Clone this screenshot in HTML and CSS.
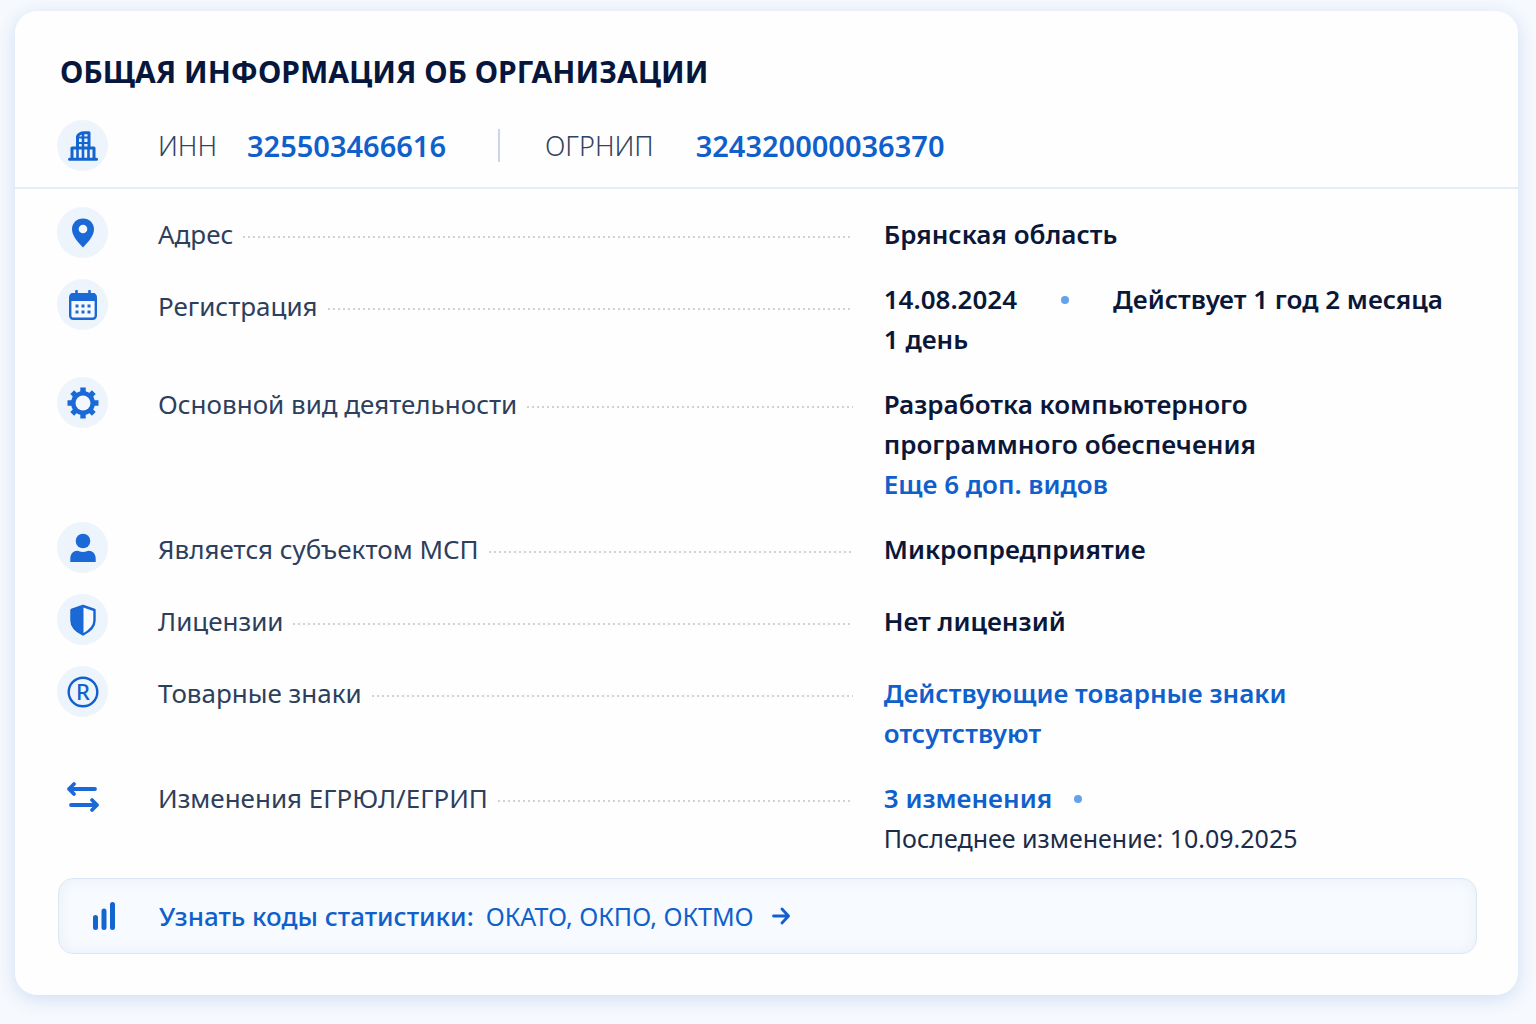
FILE: index.html
```html
<!DOCTYPE html>
<html lang="ru">
<head>
    <meta charset="UTF-8">
    <meta name="viewport" content="width=device-width, initial-scale=1">
    <title>Общая информация об организации</title>
    <link rel="stylesheet" href="styles.css">
</head>
<body>
    <main class="card">
        <h1 class="title">ОБЩАЯ ИНФОРМАЦИЯ ОБ ОРГАНИЗАЦИИ</h1>

        <!-- ИНН и ОГРНИП -->
        <div class="codes">
            <span class="icon">
                <svg width="30" height="30" viewBox="0 0 30 30" fill="none" stroke="#1565d0">
                    <path d="M1.500 28.300h27" stroke-width="3" stroke-linecap="round"/>
                    <path d="M4 28V17h22v11M9.500 17V5.500C11 2.500 13 1.800 16 1.800h5V17" stroke-width="3" stroke-linejoin="round"/>
                    <path d="M9.500 17v11M15 2v26M20.500 17v11" stroke-width="2.600"/>
                    <path d="M9.500 6.500h11M9.500 12h11" stroke-width="2.200"/>
                </svg>
            </span>
            <span class="code-label">ИНН</span>
            <a class="code" href="#">325503466616</a>
            <span class="separator"></span>
            <span class="code-label">ОГРНИП</span>
            <a class="code" href="#">324320000036370</a>
        </div>

        <!-- Основные сведения -->
        <dl class="rows">
            <div class="row">
                <dt class="name">
                    <span class="icon">
                        <svg width="24" height="30" viewBox="0 0 24 30">
                            <path d="M12 .5C5.700.5 1 5.200 1 11.200 1 18.500 8 25 12 29.500 16 25 23 18.500 23 11.200 23 5.200 18.300.5 12 .5z" fill="#1b69d6"/>
                            <circle cx="12" cy="11" r="4.300" fill="#f3f8fd"/>
                        </svg>
                    </span>
                    <span class="label">Адрес</span>
                    <span class="dots"></span>
                </dt>
                <dd class="value">Брянская область</dd>
            </div>

            <div class="row">
                <dt class="name">
                    <span class="icon">
                        <svg width="28" height="30" viewBox="0 0 28 30">
                            <path d="M7.500 1v4M20.500 1v4" stroke="#1b69d6" stroke-width="2.600" stroke-linecap="round"/>
                            <rect x="1.200" y="4.200" width="25.600" height="24.600" rx="3" fill="#f6faff" stroke="#1b69d6" stroke-width="2.400"/>
                            <path d="M1 11V6a3 3 0 0 1 3-3h20a3 3 0 0 1 3 3v5z" fill="#1b69d6"/>
                            <path d="M6.500 16h3M12.500 16h3M18.500 16h3M6.500 22h3M12.500 22h3M18.500 22h3" stroke="#1b69d6" stroke-width="2.800"/>
                        </svg>
                    </span>
                    <span class="label">Регистрация</span>
                    <span class="dots"></span>
                </dt>
                <dd class="value value-top">14.08.2024<span class="bullet bullet-wide"></span>Действует 1 год 2 месяца<br>1 день</dd>
            </div>

            <div class="row">
                <dt class="name">
                    <span class="icon">
                        <svg width="32" height="32" viewBox="0 0 32 32">
                            <g stroke="#1b69d6" stroke-width="5.400">
                                <path d="M16 .5v31M.5 16h31"/>
                                <path d="M5.200 5.200l21.600 21.600M26.800 5.200L5.200 26.800"/>
                            </g>
                            <circle cx="16" cy="16" r="12" fill="#1b69d6"/>
                            <circle cx="16" cy="16" r="7.500" fill="#f3f8fd"/>
                        </svg>
                    </span>
                    <span class="label">Основной вид деятельности</span>
                    <span class="dots"></span>
                </dt>
                <dd class="value value-narrow">
                    Разработка компьютерного программного обеспечения
                    <a class="block-link" href="#">Еще 6 доп. видов</a>
                </dd>
            </div>

            <div class="row">
                <dt class="name">
                    <span class="icon">
                        <svg width="26" height="30" viewBox="0 0 26 30" fill="#1b69d6">
                            <circle cx="13" cy="8" r="7.300"/>
                            <path d="M.300 29v-3.500C.3 20.500 3.500 17.700 7.200 17.700c2 0 3 1.300 5.800 1.300s3.800-1.300 5.800-1.300c3.700 0 6.900 2.800 6.900 7.800V29z"/>
                        </svg>
                    </span>
                    <span class="label">Является субъектом МСП</span>
                    <span class="dots"></span>
                </dt>
                <dd class="value">Микропредприятие</dd>
            </div>

            <div class="row">
                <dt class="name">
                    <span class="icon">
                        <svg width="26" height="32" viewBox="0 0 26 32">
                            <path d="M13 2L24.500 6v10.500c0 6-4.500 10.500-11.500 14-7-3.500-11.500-8-11.500-14V6z" fill="#f8fbff" stroke="#1565d0" stroke-width="2.400" stroke-linejoin="round"/>
                            <path d="M13.500 2L1.500 6v10.500c0 6 5 10.500 12 14z" fill="#1b69d6"/>
                        </svg>
                    </span>
                    <span class="label">Лицензии</span>
                    <span class="dots"></span>
                </dt>
                <dd class="value">Нет лицензий</dd>
            </div>

            <div class="row">
                <dt class="name">
                    <span class="icon">
                        <svg width="32" height="32" viewBox="0 0 32 32">
                            <circle cx="16" cy="16" r="14.300" fill="none" stroke="#1260cf" stroke-width="2.400"/>
                            <text class="mark" x="16" y="24" text-anchor="middle">R</text>
                        </svg>
                    </span>
                    <span class="label">Товарные знаки</span>
                    <span class="dots"></span>
                </dt>
                <dd class="value value-narrow"><a href="#">Действующие товарные знаки отсутствуют</a></dd>
            </div>

            <div class="row">
                <dt class="name">
                    <span class="icon icon-plain">
                        <svg width="34" height="32" viewBox="0 0 34 32" fill="none" stroke="#1b69d6" stroke-width="3.800" stroke-linecap="round" stroke-linejoin="round">
                            <path d="M29 8H3M8 3L3 8l5 5"/>
                            <path d="M5 24h26M26 19l5 5-5 5"/>
                        </svg>
                    </span>
                    <span class="label">Изменения ЕГРЮЛ/ЕГРИП</span>
                    <span class="dots"></span>
                </dt>
                <dd class="value">
                    <a href="#">3 изменения</a><span class="bullet"></span>
                    <span class="note">Последнее изменение: 10.09.2025</span>
                </dd>
            </div>
        </dl>

        <!-- Коды статистики -->
        <a class="stats" href="#">
            <svg class="stats-icon" width="24" height="30" viewBox="0 0 24 30" stroke="#1565d0" stroke-width="5" stroke-linecap="round">
                <path d="M3.500 16.500v10M12 10v16.500M20.500 3.500v23"/>
            </svg>
            <span class="stats-title">Узнать коды статистики:</span>
            <span class="stats-codes">ОКАТО, ОКПО, ОКТМО</span>
            <svg class="arrow" width="18" height="18" viewBox="0 0 18 18" fill="none" stroke="#1260cf" stroke-width="2.800" stroke-linecap="round" stroke-linejoin="round">
                <path d="M1.500 9h15M10 2l6.500 7-6.500 7"/>
            </svg>
        </a>
    </main>
</body>
</html>
```
FILE: styles.css
```css
* {
    box-sizing: border-box;
}
body {
    margin: 0;
    padding: 11px 18px 28px 15px;
    background-color: #f6f9fd;
    font-family: 'Noto Sans', 'Open Sans', sans-serif;
    font-size: 26px;
    line-height: 40px;
    color: #0a1738;
}
a {
    color: #0f60cb;
    text-decoration: none;
}
.card {
    padding-bottom: 41px;
    background-color: #fefefe;
    border-radius: 22px;
    box-shadow: 0 4px 18px rgba(80, 130, 215, 0.22);
}
.title {
    margin: 0;
    padding: 41px 45px 0;
    font-size: 30px;
    line-height: 40px;
    font-weight: 700;
    color: #06163c;
}

/* ИНН / ОГРНИП */
.codes {
    display: flex;
    align-items: center;
    padding: 28px 42px 16px;
    border-bottom: 2px solid #e6edf6;
}
.code-label {
    margin-right: 30px;
    font-size: 27px;
    font-weight: 300;
    color: #33435f;
}
.separator + .code-label {
    margin-right: 42px;
}
.code {
    font-size: 29px;
    font-weight: 600;
}
.separator {
    width: 2px;
    height: 33px;
    margin: 0 45px 0 52px;
    background-color: #cbd6ea;
}

/* Значки */
.icon {
    display: flex;
    flex: none;
    align-items: center;
    align-self: flex-start;
    justify-content: center;
    width: 51px;
    height: 51px;
    margin-right: 50px;
    border-radius: 50%;
    background-color: #edf4fb;
}
.icon-plain {
    background: none;
}
.mark {
    font-size: 22px;
    font-weight: 500;
    fill: #1260cf;
}

/* Строки сведений */
.rows {
    display: flex;
    flex-direction: column;
    gap: 18px;
    margin: 0;
    padding: 18px 40px 0 42px;
}
.row {
    display: grid;
    grid-template-columns: 56% 1fr;
    column-gap: 31px;
    align-items: start;
}
.name {
    display: flex;
    align-items: center;
}
.label {
    line-height: 54px;
    color: #2d3f5d;
}
.dots {
    flex: 1;
    height: 2px;
    margin: 6px 0 0 10px;
    background: repeating-linear-gradient(to right, #cdd1d8 0 2px, transparent 2px 5px);
}
.value {
    margin: 0;
    padding-top: 7px;
    font-weight: 600;
}
.value-top {
    padding-top: 0;
}
.value-narrow {
    max-width: 480px;
}
.block-link, .note {
    display: block;
}
.note {
    font-size: 25px;
    font-weight: 400;
    color: #1c2b48;
}
.bullet {
    display: inline-block;
    width: 8px;
    height: 8px;
    margin: 0 22px;
    border-radius: 50%;
    background-color: #64a1ee;
    vertical-align: 5px;
}
.bullet-wide {
    margin: 0 44px;
}

/* Коды статистики */
.stats {
    display: flex;
    align-items: center;
    margin: 20px 41px 0 43px;
    padding: 17px 33px;
    border: 1px solid #dbe7f4;
    border-radius: 15px;
    background-color: #f7fafe;
    box-shadow: inset 0 0 14px rgba(110, 150, 200, 0.1);
}
.stats-icon {
    margin-right: 43px;
}
.stats-title {
    margin-right: 12px;
    font-weight: 500;
}
.stats-codes {
    font-size: 25px;
}
.arrow {
    margin-left: 18px;
}
```
